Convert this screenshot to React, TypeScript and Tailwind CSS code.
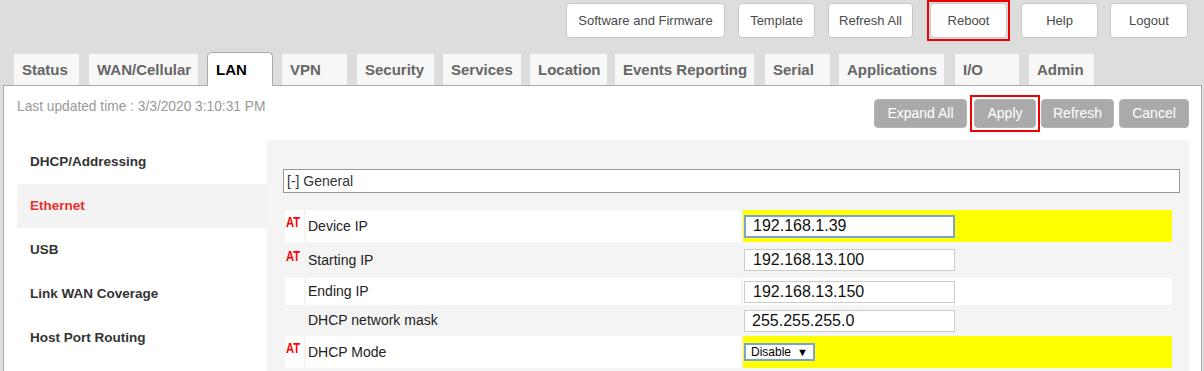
import React from "react";

const tabs: { label: string; cls: string; active?: boolean }[] = [
  { label: "Status", cls: "ml-[14px] w-[65px]" },
  { label: "WAN/Cellular", cls: "ml-[10px] w-[109px]" },
  { label: "LAN", cls: "ml-[9px] w-[66px]", active: true },
  { label: "VPN", cls: "ml-[9px] w-[65px]" },
  { label: "Security", cls: "ml-[10px] w-[77px]" },
  { label: "Services", cls: "ml-[9px] w-[78px]" },
  { label: "Location", cls: "ml-[9px] w-[77px]" },
  { label: "Events Reporting", cls: "ml-[8px] w-[139px]" },
  { label: "Serial", cls: "ml-[11px] w-[65px]" },
  { label: "Applications", cls: "ml-[9px] w-[105px]" },
  { label: "I/O", cls: "ml-[11px] w-[64px]" },
  { label: "Admin", cls: "ml-[10px] w-[65px]" },
];

const topBtn =
  "h-[35px] bg-white border border-[#c8c8c8] rounded-[4px] text-[13px] text-[#4a4a4a] flex items-center justify-center";

const grayBtn =
  "h-[29px] bg-[#aaaaaa] border border-[#b4b4b4] rounded-[4px] text-[14px] text-white flex items-center justify-center";

const sideItems = ["DHCP/Addressing", "Ethernet", "USB", "Link WAN Coverage", "Host Port Routing"];

function AT() {
  return (
    <span className="block origin-left scale-x-[0.8] text-[14px] leading-[16px] font-semibold text-[#ff0000]">AT</span>
  );
}

export default function App() {
  return (
    <div className="w-[1204px] h-[371px] overflow-hidden bg-[#dddddd] font-['Liberation_Sans',Arial,sans-serif]">
      {/* top buttons */}
      <div className="h-[41px] flex items-center justify-end pr-[16px]">
        <div className={`${topBtn} w-[159px]`}>Software and Firmware</div>
        <div className={`${topBtn} w-[77px] ml-[13px]`}>Template</div>
        <div className={`${topBtn} w-[85px] ml-[13px]`}>Refresh All</div>
        <div className="ml-[14px] border-2 border-[#ee0000] p-[1px]">
          <div className={`${topBtn} w-[77px]`}>Reboot</div>
        </div>
        <div className={`${topBtn} w-[77px] ml-[11px]`}>Help</div>
        <div className={`${topBtn} w-[78px] ml-[12px]`}>Logout</div>
      </div>

      {/* tabs */}
      <div className="mt-[11px] h-[33px] flex items-end">
        {tabs.map((t) =>
          t.active ? (
            <div
              key={t.label}
              className={`${t.cls} relative z-10 -mb-px h-[34px] bg-white border border-b-0 border-[#aaaaaa] rounded-t-[5px] pl-[8px] pt-[2px] flex items-center text-[15px] font-bold text-black`}
            >
              {t.label}
            </div>
          ) : (
            <div
              key={t.label}
              className={`${t.cls} h-[31px] bg-[#f7f7f7] pl-[8px] pt-[1px] flex items-center text-[15px] font-bold text-[#666]`}
            >
              {t.label}
            </div>
          )
        )}
      </div>

      {/* panel */}
      <div className="ml-[3px] w-[1199px] h-[400px] bg-white border border-[#aaaaaa]">
        <div className="h-[54px] flex justify-between pl-[13px] pr-[12px]">
          <div className="mt-[13px] text-[13.75px] leading-[16px] text-[#999]">Last updated time : 3/3/2020 3:10:31 PM</div>
          <div className="mt-[9px] h-[37px] flex items-center">
            <div className={`${grayBtn} w-[93px]`}>Expand All</div>
            <div className="ml-[3px] border-2 border-[#ee0000] p-[2px]">
              <div className={`${grayBtn} w-[62px]`}>Apply</div>
            </div>
            <div className={`${grayBtn} w-[73px] ml-[1px]`}>Refresh</div>
            <div className={`${grayBtn} w-[70px] ml-[5px]`}>Cancel</div>
          </div>
        </div>

        <div className="flex pl-[13px] pr-[12px]">
          {/* sidebar */}
          <div className="w-[250px] shrink-0">
            {sideItems.map((s) => (
              <div
                key={s}
                className={`h-[44px] pl-[13px] flex items-center text-[13.5px] font-bold ${
                  s === "Ethernet" ? "bg-[#f3f3f3] text-[#e8302e]" : "text-[#333]"
                }`}
              >
                {s}
              </div>
            ))}
          </div>

          {/* content */}
          <div className="flex-1 h-[260px] bg-[#f4f4f4] pt-[29px] pl-[16px] pr-[9px]">
            <div className="h-[24px] bg-white border border-[#999] pl-[3px] flex items-center text-[14px] text-[#333]">
              [-] General
            </div>
            <div className="mt-[17px] ml-[2px] mr-[8px] flex flex-col gap-[2px]">
              {/* Device IP */}
              <div className="h-[32px] flex gap-[2px]">
                <div className="w-[19px] bg-white pl-[1px] pt-[4px] flex items-start"><AT /></div>
                <div className="w-[435px] bg-white pl-[2px] flex items-center text-[14px] text-[#222]">Device IP</div>
                <div className="flex-1 bg-[#ffff00] pl-[1px] flex items-center">
                  <input
                    readOnly
                    value="192.168.1.39"
                    className="w-[211px] h-[23px] bg-white border-2 border-[#7ba2d6] pl-[7px] text-[16px] text-[#111] outline-none"
                  />
                </div>
              </div>
              {/* Starting IP */}
              <div className="h-[32px] flex gap-[2px]">
                <div className="w-[19px] pl-[1px] pt-[4px] flex items-start"><AT /></div>
                <div className="w-[435px] pl-[2px] flex items-center text-[14px] text-[#222]">Starting IP</div>
                <div className="flex-1 pl-[1px] flex items-center">
                  <input
                    readOnly
                    value="192.168.13.100"
                    className="w-[211px] h-[22px] bg-white border border-[#cccccc] pl-[8px] text-[16px] text-[#111] outline-none"
                  />
                </div>
              </div>
              {/* Ending IP */}
              <div className="h-[27px] flex gap-[2px]">
                <div className="w-[19px] bg-white"></div>
                <div className="w-[435px] bg-white pl-[2px] flex items-center text-[14px] text-[#222]">Ending IP</div>
                <div className="flex-1 bg-white pl-[1px] flex items-center">
                  <input
                    readOnly
                    value="192.168.13.150"
                    className="w-[211px] h-[22px] bg-white border border-[#cccccc] pl-[8px] text-[16px] text-[#111] outline-none"
                  />
                </div>
              </div>
              {/* DHCP network mask */}
              <div className="h-[27px] flex gap-[2px]">
                <div className="w-[19px]"></div>
                <div className="w-[435px] pl-[2px] flex items-center text-[14px] text-[#222]">DHCP network mask</div>
                <div className="flex-1 pl-[1px] flex items-center">
                  <input
                    readOnly
                    value="255.255.255.0"
                    className="w-[211px] h-[22px] bg-white border border-[#cccccc] pl-[7px] text-[16px] text-[#111] outline-none"
                  />
                </div>
              </div>
              {/* DHCP Mode */}
              <div className="h-[32px] flex gap-[2px]">
                <div className="w-[19px] bg-white pl-[1px] pt-[4px] flex items-start"><AT /></div>
                <div className="w-[435px] bg-white pl-[2px] flex items-center text-[14px] text-[#222]">DHCP Mode</div>
                <div className="flex-1 bg-[#ffff00] pl-[1px] flex items-center">
                  <div className="w-[71px] h-[18px] bg-white border-2 border-[#7ba2d6] pl-[5px] flex items-center text-[12px] text-black">
                    Disable<span className="ml-[6px] text-[11px]">▼</span>
                  </div>
                </div>
              </div>
            </div>
          </div>
        </div>
      </div>
    </div>
  );
}
